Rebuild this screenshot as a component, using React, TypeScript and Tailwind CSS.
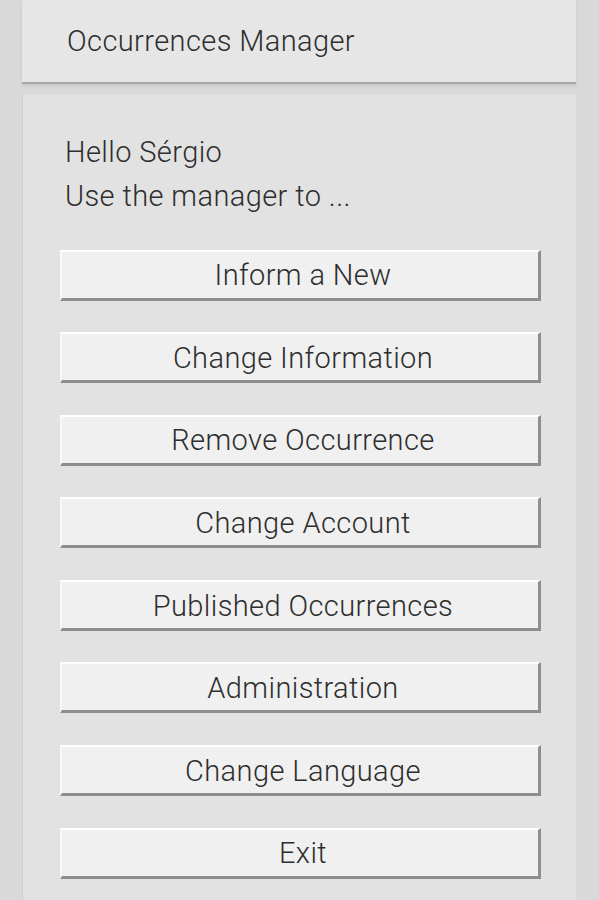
import React from 'react';

const actions = [
  'Inform a New',
  'Change Information',
  'Remove Occurrence',
  'Change Account',
  'Published Occurrences',
  'Administration',
  'Change Language',
  'Exit',
];

export default function App() {
  return (
    <div
      className="h-[900px] w-[599px] overflow-hidden bg-[#d9d9d9] text-[#2e2e2e]"
      style={{ fontFamily: 'Roboto, "Noto Sans", sans-serif' }}
    >
      <div className="ml-[22px] w-[554px]">
        <header className="flex h-[84px] items-center border-b-2 border-[#a6a6a6] bg-[#e6e6e6] pl-[45px] pt-[2px] text-[29px] font-light tracking-[0.4px] shadow-[0_2px_3px_rgba(0,0,0,0.08)]">
          Occurrences Manager
        </header>

        <main className="mt-[10px] h-[820px] border-l border-[#cfcfcf] bg-[#e2e2e2] pl-[42px] pr-[35px] pt-[36px]">
          <p className="text-[29px] font-light leading-[44px] tracking-[0.4px]">Hello Sérgio</p>
          <p className="text-[29px] font-light leading-[44px] tracking-[0.4px]">Use the manager to ...</p>

          <div className="-ml-[5px] mt-[31.5px] flex flex-col gap-[31.6px]">
            {actions.map((label) => (
              <button
                key={label}
                className="flex h-[51px] w-[481px] items-center justify-center border-l-2 border-t-2 border-b-[3px] border-r-[3px] border-l-[#f8f8f8] border-t-white border-b-[#8e8e8e] border-r-[#8e8e8e] bg-[#f0f0f0] pl-[6px] pt-[3px] text-[29px] font-light tracking-[0.4px] text-[#2e2e2e]"
              >
                {label}
              </button>
            ))}
          </div>
        </main>
      </div>
    </div>
  );
}
